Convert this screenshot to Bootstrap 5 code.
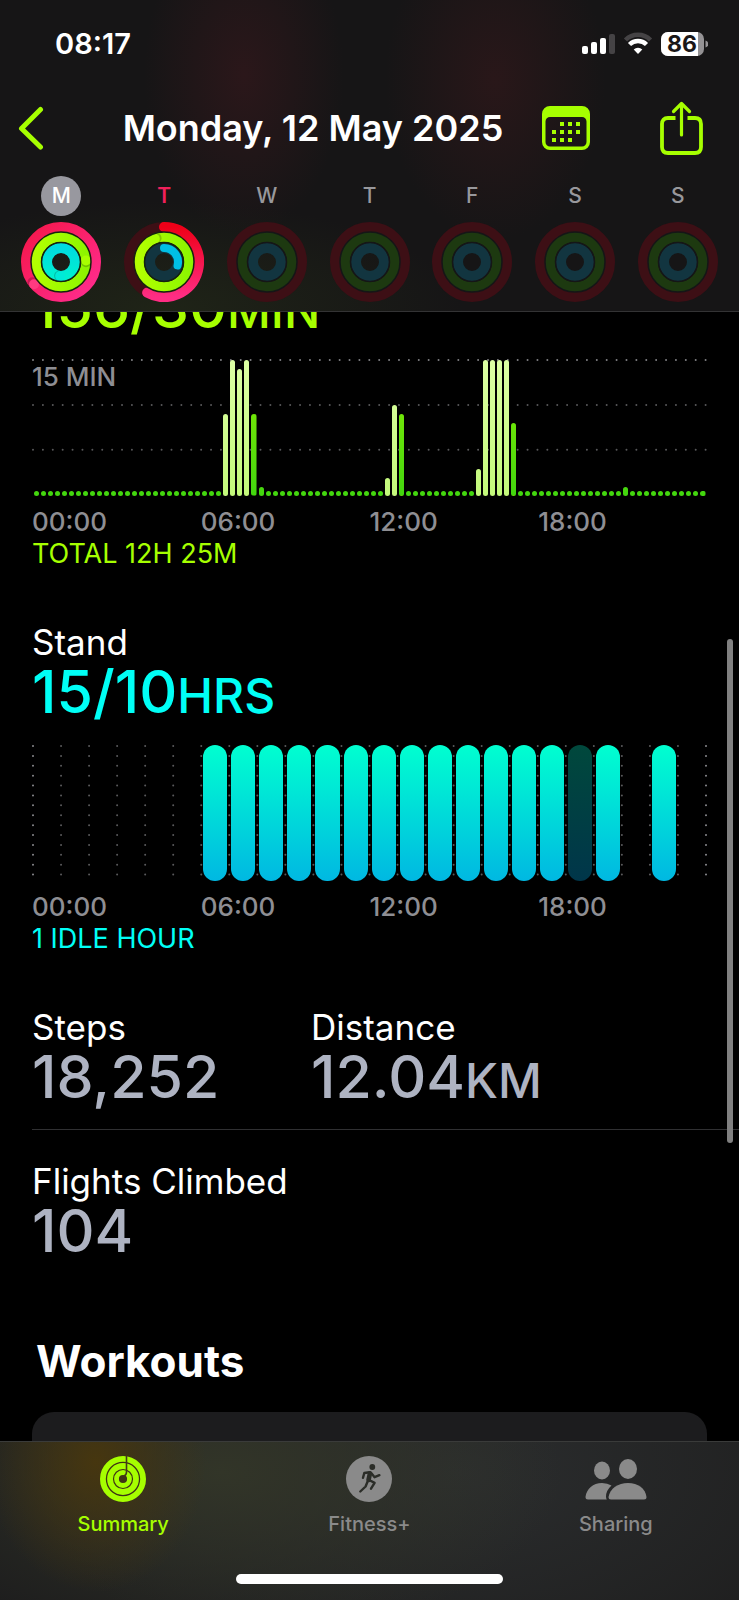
<!DOCTYPE html>
<html lang="en" data-bs-theme="dark">
<head>
<meta charset="utf-8">
<meta name="viewport" content="width=device-width, initial-scale=1">
<title>Activity</title>
<link href="https://cdn.jsdelivr.net/npm/bootstrap@5.3.0/dist/css/bootstrap.min.css" rel="stylesheet">
<style>
  :root { --lime: #a6ff00; --aqua: #00fff6; --silver: #aeb3c2; --dim: #8e8e93; --chart: 136px; }
  body { background: #000; color: #fff; font-family: Inter, "Liberation Sans", sans-serif; }
  .app-top {
    background:
      radial-gradient(ellipse 100px 160px at 33% 75px, #2b171a, transparent),
      radial-gradient(ellipse 110px 160px at 67% 80px, #291719, transparent),
      radial-gradient(ellipse 300px 110px at 22% 100%, #1f2417, transparent),
      #161516;
    border-bottom: 1px solid #333334;
  }
  .status-row { height: 88px; padding: 0 31px 0 55px; font-size: 29px; font-weight: 600; }
  .title-row { height: 80px; padding: 0 36px 0 18px; }
  .title-row h1 { font-size: 36px; font-weight: 600; line-height: 44px; padding-left: 40px; }
  .icon-btn { color: var(--lime); line-height: 0; }
  .share-btn { margin-left: 70px; }
  .week-row { padding: 8px 10px 9px; }
  .day-link { color: #98989c; font-size: 21px; font-weight: 500; line-height: 40px; gap: 6px; }
  .day-link:hover { color: #fff; }
  .day-mark { width: 40px; height: 40px; text-align: center; }
  .day-mark.picked { background: #98989f; color: #fff; }
  .day-mark.today { color: #f0205a; font-weight: 600; }

  .scroll-body { padding-left: 32px; min-height: 0; }
  .scroll-inner { margin-top: -33px; }
  .page-col { padding-right: 32px; }
  .metric-label { font-size: 35px; font-weight: 400; line-height: 44px; margin: 0; }
  .metric-value { font-size: 59px; font-weight: 500; line-height: 56px; margin: 0; }
  .metric-value span { font-size: 48px; line-height: 1; }
  .tint-lime { color: var(--lime); }
  .tint-aqua { color: var(--aqua); }
  .tint-silver { color: var(--silver); }
  .chart-area { height: var(--chart); margin-top: 25px; }
  .chart-area svg { inset: 0 1px; width: calc(100% - 2px); height: 100%; overflow: visible; }
  .chart-cap { color: var(--dim); font-size: 26px; font-weight: 500; line-height: 32px; top: 1px; left: 0; }
  .bars { height: 100%; margin: 0 1px; }
  .bars > i { flex: 1 1 0; padding: 0 1px; display: flex; min-height: 5px; }
  .bars > i > b { width: 100%; border-radius: 3px; background: linear-gradient(to top, #42d60e, #8df003) bottom / 100% var(--chart); }
  .bars > i > b.hot { background-image: linear-gradient(to top, #c3f97a, #dcffa4); }
  .stand > i { padding: 0 2px; }
  .stand > i > b { height: 100%; border-radius: 12px; background: linear-gradient(#00ffd0, #00b8e2); }
  .stand > i > b.idle { background: linear-gradient(#00483c, #00364a); }
  .hours { color: var(--dim); font-size: 26px; font-weight: 500; line-height: 32px; margin-top: 10px; }
  .hours span { flex: 1 1 0; }
  .note { font-size: 27px; line-height: 32px; }
  .gap-block { margin-top: 50px; }
  .rule { display: grid; grid-template-columns: 279px 1fr; border-bottom: 1px solid #303032; padding-bottom: 24px; margin-bottom: 29px; }
  h2.section { font-size: 44px; font-weight: 700; line-height: 56px; margin: 74px 0 23px 4px; }
  .workout-card { background: #1c1c1e; border-radius: 22px; min-height: 120px; }
  .scroll-thumb { width: 6px; height: 504px; top: 29%; right: 6px; background: #808080; z-index: 2; }

  .app-tabs {
    background:
      radial-gradient(ellipse 110px 130px at 13% 20px, #46360f, transparent),
      radial-gradient(ellipse 340px 170px at 30% 30px, #323528, transparent),
      radial-gradient(ellipse 420px 230px at 62% 30px, #2b2d2e, transparent),
      #1e1e1e;
    border-top: 1px solid #3a3b3a;
    padding: 13px 0 16px;
  }
  .tab-link { color: #8a8a8a; font-size: 20px; font-weight: 500; line-height: 28px; gap: 7px; }
  .tab-link:hover { color: #bbb; }
  .tab-link.on { color: var(--lime); }
  .home-bar { width: 36%; height: 10px; background: #fff; margin: 36px auto 0; }
</style>
</head>
<body>
<div class="vh-100 d-flex flex-column">
  <header class="app-top flex-shrink-0">
    <div class="status-row d-flex align-items-center justify-content-between">
      <span>08:17</span>
      <svg width="127" height="26" viewBox="0 0 127 26" aria-label="Signal, Wi-Fi, battery 86 percent">
        <g fill="#fff"><rect x="1" y="15" width="6" height="8" rx="2"/><rect x="10" y="11" width="6" height="12" rx="2"/><rect x="19" y="7" width="6" height="16" rx="2"/></g>
        <rect x="28" y="3" width="6" height="20" rx="2" fill="#454345"/>
        <g fill="none"><path d="M44.500 9.000A17.500 17.500 0 0 1 69.500 9.000" stroke="#454345" stroke-width="4.600"/><path d="M48.500 13.500A12 12 0 0 1 65.500 13.500" stroke="#fff" stroke-width="4.400"/></g>
        <path d="M57 23l-4.300-4.400a6.200 6.200 0 0 1 8.600 0z" fill="#fff"/>
        <path d="M87 1h29a7 7 0 0 1 7 7v10a7 7 0 0 1-7 7H87a7 7 0 0 1-7-7V8a7 7 0 0 1 7-7z" fill="#949294"/>
        <path d="M87 1h30v24H87a7 7 0 0 1-7-7V8a7 7 0 0 1 7-7z" fill="#fff"/>
        <path d="M124.500 9.500q3 1 3 3.500t-3 3.500z" fill="#949294"/>
        <text x="101" y="21" text-anchor="middle" font-size="23" font-weight="700" fill="#1a1718">86</text>
      </svg>
    </div>
    <div class="title-row d-flex align-items-center">
      <button class="btn p-0 border-0 icon-btn" aria-label="Back">
        <svg width="26" height="44" viewBox="0 0 26 44" fill="none" stroke="currentColor" stroke-width="5" stroke-linecap="round" stroke-linejoin="round"><path d="M22.500 3.500L3.500 22.500 22.500 41"/></svg>
      </button>
      <h1 class="flex-grow-1 text-center mb-0 text-nowrap">Monday, 12 May 2025</h1>
      <button class="btn p-0 border-0 icon-btn" aria-label="Calendar">
        <svg width="48" height="44" viewBox="0 0 48 44"><path fill="currentColor" fill-rule="evenodd" d="M8 0h32a8 8 0 0 1 8 8v28a8 8 0 0 1-8 8H8a8 8 0 0 1-8-8V8a8 8 0 0 1 8-8zM8 11a4.500 4.500 0 0 0-4.500 4.500V36a4.500 4.500 0 0 0 4.500 4.500h32a4.500 4.500 0 0 0 4.500-4.500V15.500A4.500 4.500 0 0 0 40 11z"/><g fill="currentColor"><path d="M18 16h4v4h-4zM26 16h4v4h-4zM34 16h4v4h-4zM10 24h4v4h-4zM18 24h4v4h-4zM26 24h4v4h-4zM34 24h4v4h-4zM10 32h4v4h-4zM18 32h4v4h-4zM26 32h4v4h-4z"/></g></svg>
      </button>
      <button class="btn p-0 border-0 icon-btn share-btn" aria-label="Share">
        <svg width="43" height="54" viewBox="0 0 43 54" fill="none" stroke="currentColor" stroke-width="3.800" stroke-linecap="round" stroke-linejoin="round"><path d="M15.500 17H8q-6 0-6 6v23q0 6 6 6h27q6 0 6-6V23q0-6-6-6h-7.500" stroke-linecap="butt"/><path d="M21.500 34V2.500M13.500 10.500l8-8 8 8" stroke-width="3.200"/></svg>
      </button>
    </div>
    <nav class="week-row d-flex" id="week" aria-label="Days of the week"></nav>
  </header>

  <main class="flex-grow-1 overflow-hidden position-relative scroll-body">
    <div class="scroll-inner">
      <div class="page-col">
        <p class="metric-value tint-lime">156/30<span>MIN</span></p>
        <div class="chart-area position-relative">
          <svg class="position-absolute" id="moveGrid" aria-hidden="true"></svg>
          <div class="chart-cap position-absolute">15 MIN</div>
          <div class="bars position-relative d-flex align-items-end" id="exercise"></div>
        </div>
        <div class="hours d-flex"><span>00:00</span><span>06:00</span><span>12:00</span><span>18:00</span></div>
        <div class="note tint-lime">TOTAL 12H 25M</div>

        <h2 class="metric-label gap-block">Stand</h2>
        <p class="metric-value tint-aqua">15/10<span>HRS</span></p>
        <div class="chart-area position-relative">
          <svg class="position-absolute" id="standGrid" aria-hidden="true"></svg>
          <div class="bars stand position-relative d-flex" id="standBars"></div>
        </div>
        <div class="hours d-flex"><span>00:00</span><span>06:00</span><span>12:00</span><span>18:00</span></div>
        <div class="note tint-aqua">1 IDLE HOUR</div>
      </div>

      <div class="gap-block rule">
        <div><h2 class="metric-label">Steps</h2><p class="metric-value tint-silver">18,252</p></div>
        <div><h2 class="metric-label">Distance</h2><p class="metric-value tint-silver">12.04<span>KM</span></p></div>
      </div>
      <h2 class="metric-label">Flights Climbed</h2>
      <p class="metric-value tint-silver">104</p>

      <div class="page-col">
        <h2 class="section">Workouts</h2>
        <div class="workout-card"></div>
      </div>
    </div>
    <div class="scroll-thumb position-absolute rounded-pill"></div>
  </main>

  <footer class="app-tabs flex-shrink-0">
    <nav class="row g-0 text-center" aria-label="Sections">
      <a class="col tab-link on d-flex flex-column align-items-center text-decoration-none" href="#summary" aria-current="page">
        <svg width="48" height="48" viewBox="-24 -24 48 48" fill="none" stroke="currentColor" stroke-width="5.800"><circle r="20.100"/><circle r="13"/><circle r="6.500" stroke-width="4.800"/><path d="M3.500-23.500V-7q0 3-2.500 4" stroke="#43391a" stroke-width="1.600"/></svg>
        <span>Summary</span>
      </a>
      <a class="col tab-link d-flex flex-column align-items-center text-decoration-none" href="#fitness">
        <svg width="48" height="48" viewBox="-1 -1 48 48"><circle cx="23" cy="23" r="23" fill="currentColor"/><circle cx="26.300" cy="11" r="2.900" fill="#2b2d28"/><g fill="none" stroke="#2b2d28" stroke-width="2.400" stroke-linecap="round" stroke-linejoin="round"><path d="M23.500 16.200L18.300 17 17 21.800M25.600 17.600l3 3.600 4.800-2M23.600 24.300l5 2.600-3.600 5.800M21.400 26l-1.800 4.500-5.300 5"/><path d="M24 17.300L22.500 24" stroke-width="4.600"/></g></svg>
        <span>Fitness+</span>
      </a>
      <a class="col tab-link d-flex flex-column align-items-center text-decoration-none" href="#sharing">
        <svg width="62" height="48" viewBox="0 0 62 48" fill="currentColor"><ellipse cx="17" cy="15.500" rx="8" ry="9"/><ellipse cx="43" cy="14" rx="9" ry="10"/><path d="M3 44.500Q.5 44.500.5 42C1.500 34 8 28 17 28q5.500 0 9.500 2.500-5.500 5-5.500 11 0 2 .8 3z"/><path d="M26 44.500q-2.500 0-2.500-2.500C25 33.500 33 28 43 28s17.500 5.500 18.500 14q0 2.500-2.500 2.500z"/></svg>
        <span>Sharing</span>
      </a>
    </nav>
    <div class="home-bar rounded-pill"></div>
  </footer>
</div>

<svg width="0" height="0" class="position-absolute" aria-hidden="true">
  <defs>
    <linearGradient id="gMove" x1="0" y1="0" x2="1" y2="1"><stop offset="0" stop-color="#f5174a"/><stop offset="1" stop-color="#ff2d90"/></linearGradient>
    <linearGradient id="gMoveT" x1="0" y1="0" x2="0" y2="1"><stop offset="0" stop-color="#ee0018"/><stop offset="1" stop-color="#ff2d84"/></linearGradient>
    <linearGradient id="gEx" x1="0" y1="0" x2="1" y2="0"><stop offset="0" stop-color="#b2ff00"/><stop offset="1" stop-color="#8df500"/></linearGradient>
    <linearGradient id="gStand" x1="0" y1="0" x2="0" y2="1"><stop offset="0" stop-color="#00dbe0"/><stop offset="1" stop-color="#00efd0"/></linearGradient>
  </defs>
</svg>

<script>
  // Share of each goal reached: move, exercise, stand. Above 1 the ring laps itself.
  const days = [
    { letter: 'M', mark: 'picked', rings: [1.64, 1.24, 1.51] },
    { letter: 'T', mark: 'today', rings: [0.58, 0.94, 0.29] },
    ...['W', 'T', 'F', 'S', 'S'].map(letter => ({ letter, mark: '', rings: [0, 0, 0] }))
  ];
  const spec = [
    { r: 35, w: 10, track: '#3d0f15' },
    { r: 25, w: 10, track: '#1d3910' },
    { r: 14, w: 10, track: '#123540' }
  ];
  const colours = day => [day.mark === 'today' ? 'url(#gMoveT)' : 'url(#gMove)', 'url(#gEx)', 'url(#gStand)'];
  const at = (r, part) => {
    const a = part * 2 * Math.PI;
    return [(r * Math.sin(a)).toFixed(2), (-r * Math.cos(a)).toFixed(2)];
  };
  function ringSvg(day) {
    const fill = colours(day);
    const idle = !day.mark;
    const rings = spec.map((s, i) => {
      const p = day.rings[i];
      let out = `<circle r="${s.r}" fill="none" stroke="${s.track}" stroke-width="${s.w}"/>`;
      if (p >= 0.94) {
        const [x, y] = at(s.r, p), [sx, sy] = at(s.r, p + 0.012);
        out += `<circle r="${s.r}" fill="none" stroke="${fill[i]}" stroke-width="${s.w}"/>`
          + `<circle cx="${sx}" cy="${sy}" r="${s.w / 2}" fill="#000" opacity=".2"/>`
          + `<circle cx="${x}" cy="${y}" r="${s.w / 2}" fill="${['#ff3a80', '#a8ff00', '#00ead8'][i]}"/>`;
      } else if (p > 0) {
        const [x, y] = at(s.r, p);
        out += `<path d="M0 ${-s.r}A${s.r} ${s.r} 0 ${p > .5 ? 1 : 0} 1 ${x} ${y}" fill="none" stroke="${i === 2 ? '#00bfe6' : fill[i]}" stroke-width="${i === 2 ? 8 : s.w}" stroke-linecap="round"/>`;
      }
      return out;
    }).join('');
    const seams = `<g fill="none" stroke="${idle ? '#151617' : '#16230f'}" stroke-width="1.500"><circle r="30"/><circle r="19.500"/></g>`;
    return `<svg width="80" height="80" viewBox="-40 -40 80 80" aria-hidden="true">${rings}${seams}</svg>`;
  }
  document.getElementById('week').innerHTML = days.map((d, i) =>
    `<a href="#day-${i}" class="day-link col d-flex flex-column align-items-center text-decoration-none"><span class="day-mark rounded-circle ${d.mark}">${d.letter}</span>${ringSvg(d)}</a>`).join('');

  // Exercise minutes in each quarter hour.
  const minutes = { 27: 9, 28: 15, 29: 14, 30: 15, 31: 9, 32: 1, 50: 2, 51: 10, 52: 9, 63: 3, 64: 15, 65: 15, 66: 15, 67: 15, 68: 8, 84: 1 };
  const workout = new Set([27, 28, 29, 30, 50, 51, 63, 64, 65, 66, 67]);
  document.getElementById('exercise').innerHTML = Array.from({ length: 96 }, (_, i) =>
    `<i style="height:${(minutes[i] || 0) / 15 * 100}%"><b class="${workout.has(i) ? 'hot' : ''}"></b></i>`).join('');

  // Hours with a stand, and the one spent idle.
  document.getElementById('standBars').innerHTML = Array.from({ length: 24 }, (_, i) =>
    `<i>${i === 19 ? '<b class="idle"></b>' : (i >= 6 && i <= 20) || i === 22 ? '<b></b>' : ''}</i>`).join('');

  // The path is a hair longer than n steps, so that the closing dot is drawn too.
  const dots = (x1, y1, x2, y2, n, colour) =>
    `<line x1="${x1}" y1="${y1}" x2="${x2}" y2="${y2}" pathLength="${n + 0.04}" stroke="${colour}" stroke-width="2" stroke-linecap="round" stroke-dasharray="0 1"/>`;
  document.getElementById('moveGrid').innerHTML = [0, 33, 66].map((p, i) =>
    dots('0', `${p}%`, '100%', `${p}%`, 68, i ? '#58585a' : '#808084')).join('');
  document.getElementById('standGrid').innerHTML = Array.from({ length: 25 }, (_, i) =>
    dots(`${i / 24 * 100}%`, '1', `${i / 24 * 100}%`, '130', 13, i % 24 ? '#5a5a5c' : '#8a8a8e')).join('');
</script>
<script src="https://cdn.jsdelivr.net/npm/bootstrap@5.3.0/dist/js/bootstrap.bundle.min.js"></script>
</body>
</html>
